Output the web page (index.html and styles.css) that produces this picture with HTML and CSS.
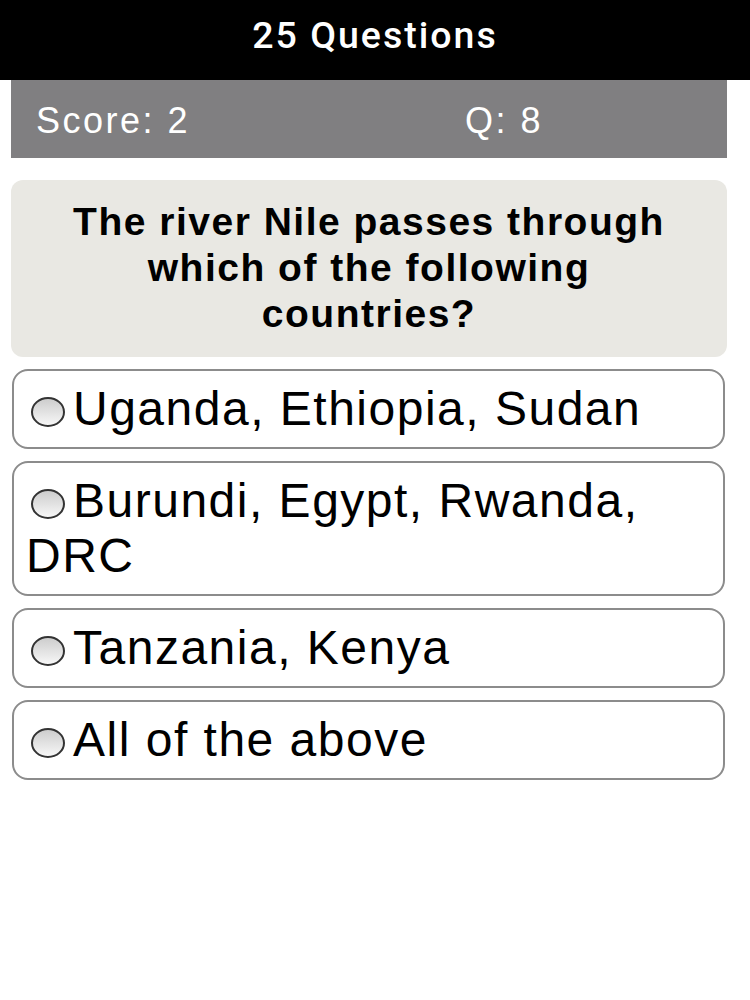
FILE: index.html
```html
<!DOCTYPE html>
<html lang="en">
<head>
    <meta charset="UTF-8">
    <meta name="viewport" content="width=device-width, initial-scale=1.0">
    <title>25 Questions</title>
    <link rel="stylesheet" href="styles.css">
</head>
<body>
    <div class="title-bar">25 Questions</div>
    <div class="container">
        <div class="status-bar">
            <span class="score">Score: 2</span>
            <span class="question-number">Q: 8</span>
        </div>

        <div class="question-text">The river Nile passes through which of the following countries?</div>

        <div class="options">
            <label class="option"><input type="radio" name="answer" class="radio">Uganda, Ethiopia, Sudan</label>
            <label class="option"><input type="radio" name="answer" class="radio">Burundi, Egypt, Rwanda, DRC</label>
            <label class="option"><input type="radio" name="answer" class="radio">Tanzania, Kenya</label>
            <label class="option"><input type="radio" name="answer" class="radio">All of the above</label>
        </div>
    </div>
</body>
</html>
```

FILE: styles.css
```css
/* Quiz screen */
body {
    margin: 0;
    padding: 0;
    font-family: "Liberation Sans", Arial, Helvetica, sans-serif;
    background-color: #fff;
    color: #000;
}
.title-bar {
    height: 71px;
    padding-bottom: 9px;
    background-color: #000;
    color: #fff;
    text-align: center;
    font-family: Roboto, "Liberation Sans", sans-serif;
    font-weight: 500;
    font-size: 37.5px;
    line-height: 71px;
    letter-spacing: 2px;
}
.container {
    margin: 0 23px 0 11px;
}
.status-bar {
    display: grid;
    grid-template-columns: 429px 1fr;
    height: 75px;
    padding: 3px 25px 0;
    background-color: #807f81;
    color: #fff;
    font-size: 36px;
    line-height: 75px;
    letter-spacing: 2.5px;
}
.question-text {
    margin-top: 22px;
    padding: 19px 50px 20px;
    background-color: #e9e8e3;
    border-radius: 12px;
    text-align: center;
    font-weight: bold;
    font-size: 39px;
    line-height: 46px;
    letter-spacing: 1.5px;
}
.options {
    display: flex;
    flex-direction: column;
    gap: 12px;
    margin: 12px 2px 0 1px;
}
.option {
    display: block;
    padding: 10px 10px 11px 12px;
    border: 2px solid #8c8c8c;
    border-radius: 16px;
    font-size: 48px;
    line-height: 55px;
    letter-spacing: 1.5px;
    cursor: pointer;
}
.radio {
    appearance: none;
    -webkit-appearance: none;
    width: 34px;
    height: 30px;
    margin: 0 8px 0 5px;
    border: 2px solid #333;
    border-radius: 50%;
    background: linear-gradient(to bottom, #cdcdcd, #f7f7f7);
    vertical-align: middle;
    box-sizing: border-box;
}
```
